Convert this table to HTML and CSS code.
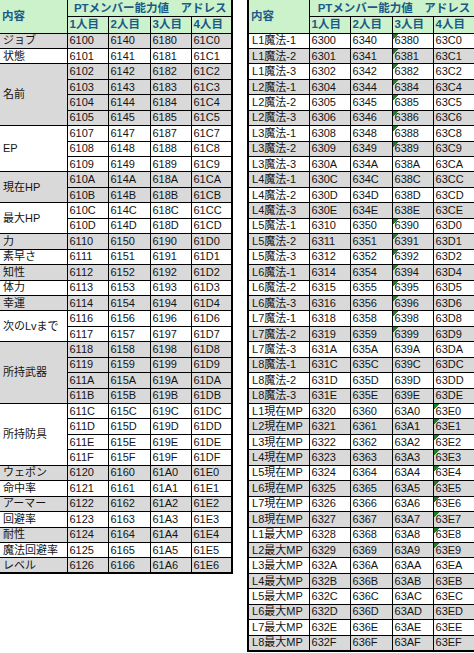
FILE: index.html
```html
<!DOCTYPE html>
<html lang="ja">
<head>
<meta charset="utf-8">
<title>PTメンバー能力値 アドレス</title>
<link rel="stylesheet" href="styles.css">
</head>
<body>
<div class="page">
  <table class="sheet left">
    <colgroup><col class="c-label-l"><col class="c-n"><col class="c-n2"><col class="c-n"><col class="c-n"></colgroup>
    <thead>
      <tr class="h"><th rowspan="2" class="hl">内容</th><th colspan="4" class="ht">PTメンバー能力値　アドレス</th></tr>
      <tr class="h"><th>1人目</th><th>2人目</th><th>3人目</th><th>4人目</th></tr>
    </thead>
    <tbody>
      <tr class="g"><td class="lb">ジョブ</td><td>6100</td><td>6140</td><td>6180</td><td>61C0</td></tr>
      <tr class="w"><td class="lb">状態</td><td>6101</td><td>6141</td><td>6181</td><td>61C1</td></tr>
      <tr class="g"><td class="lb" rowspan="4">名前</td><td>6102</td><td>6142</td><td>6182</td><td>61C2</td></tr>
      <tr class="g"><td>6103</td><td>6143</td><td>6183</td><td>61C3</td></tr>
      <tr class="g"><td>6104</td><td>6144</td><td>6184</td><td>61C4</td></tr>
      <tr class="g"><td>6105</td><td>6145</td><td>6185</td><td>61C5</td></tr>
      <tr class="w"><td class="lb" rowspan="3">EP</td><td>6107</td><td>6147</td><td>6187</td><td>61C7</td></tr>
      <tr class="w"><td>6108</td><td>6148</td><td>6188</td><td>61C8</td></tr>
      <tr class="w"><td>6109</td><td>6149</td><td>6189</td><td>61C9</td></tr>
      <tr class="g"><td class="lb" rowspan="2">現在HP</td><td>610A</td><td>614A</td><td>618A</td><td>61CA</td></tr>
      <tr class="g"><td>610B</td><td>614B</td><td>618B</td><td>61CB</td></tr>
      <tr class="w"><td class="lb" rowspan="2">最大HP</td><td>610C</td><td>614C</td><td>618C</td><td>61CC</td></tr>
      <tr class="w"><td>610D</td><td>614D</td><td>618D</td><td>61CD</td></tr>
      <tr class="g"><td class="lb">力</td><td>6110</td><td>6150</td><td>6190</td><td>61D0</td></tr>
      <tr class="w"><td class="lb">素早さ</td><td>6111</td><td>6151</td><td>6191</td><td>61D1</td></tr>
      <tr class="g"><td class="lb">知性</td><td>6112</td><td>6152</td><td>6192</td><td>61D2</td></tr>
      <tr class="w"><td class="lb">体力</td><td>6113</td><td>6153</td><td>6193</td><td>61D3</td></tr>
      <tr class="g"><td class="lb">幸運</td><td>6114</td><td>6154</td><td>6194</td><td>61D4</td></tr>
      <tr class="w"><td class="lb" rowspan="2">次のLvまで</td><td>6116</td><td>6156</td><td>6196</td><td>61D6</td></tr>
      <tr class="w"><td>6117</td><td>6157</td><td>6197</td><td>61D7</td></tr>
      <tr class="g"><td class="lb" rowspan="4">所持武器</td><td>6118</td><td>6158</td><td>6198</td><td>61D8</td></tr>
      <tr class="g"><td>6119</td><td>6159</td><td>6199</td><td>61D9</td></tr>
      <tr class="g"><td>611A</td><td>615A</td><td>619A</td><td>61DA</td></tr>
      <tr class="g"><td>611B</td><td>615B</td><td>619B</td><td>61DB</td></tr>
      <tr class="w"><td class="lb" rowspan="4">所持防具</td><td>611C</td><td>615C</td><td>619C</td><td>61DC</td></tr>
      <tr class="w"><td>611D</td><td>615D</td><td>619D</td><td>61DD</td></tr>
      <tr class="w"><td>611E</td><td>615E</td><td>619E</td><td>61DE</td></tr>
      <tr class="w"><td>611F</td><td>615F</td><td>619F</td><td>61DF</td></tr>
      <tr class="g"><td class="lb">ウェポン</td><td>6120</td><td>6160</td><td>61A0</td><td>61E0</td></tr>
      <tr class="w"><td class="lb">命中率</td><td>6121</td><td>6161</td><td>61A1</td><td>61E1</td></tr>
      <tr class="g"><td class="lb">アーマー</td><td>6122</td><td>6162</td><td>61A2</td><td>61E2</td></tr>
      <tr class="w"><td class="lb">回避率</td><td>6123</td><td>6163</td><td>61A3</td><td>61E3</td></tr>
      <tr class="g"><td class="lb">耐性</td><td>6124</td><td>6164</td><td>61A4</td><td>61E4</td></tr>
      <tr class="w"><td class="lb">魔法回避率</td><td>6125</td><td>6165</td><td>61A5</td><td>61E5</td></tr>
      <tr class="g last"><td class="lb">レベル</td><td>6126</td><td>6166</td><td>61A6</td><td>61E6</td></tr>
    </tbody>
  </table>

  <table class="sheet right">
    <colgroup><col class="c-label-r"><col class="c-n"><col class="c-n2"><col class="c-n"><col class="c-n3"></colgroup>
    <thead>
      <tr class="h"><th rowspan="2" class="hl">内容</th><th colspan="4" class="ht">PTメンバー能力値　アドレス</th></tr>
      <tr class="h"><th>1人目</th><th>2人目</th><th>3人目</th><th>4人目</th></tr>
    </thead>
    <tbody>
      <tr class="w"><td class="lb">L1魔法-1</td><td>6300</td><td>6340</td><td class="tri">6380</td><td>63C0</td></tr>
      <tr class="g"><td class="lb">L1魔法-2</td><td>6301</td><td>6341</td><td class="tri">6381</td><td>63C1</td></tr>
      <tr class="w"><td class="lb">L1魔法-3</td><td>6302</td><td>6342</td><td class="tri">6382</td><td>63C2</td></tr>
      <tr class="g"><td class="lb">L2魔法-1</td><td>6304</td><td>6344</td><td class="tri">6384</td><td>63C4</td></tr>
      <tr class="w"><td class="lb">L2魔法-2</td><td>6305</td><td>6345</td><td class="tri">6385</td><td>63C5</td></tr>
      <tr class="g"><td class="lb">L2魔法-3</td><td>6306</td><td>6346</td><td class="tri">6386</td><td>63C6</td></tr>
      <tr class="w"><td class="lb">L3魔法-1</td><td>6308</td><td>6348</td><td class="tri">6388</td><td>63C8</td></tr>
      <tr class="g"><td class="lb">L3魔法-2</td><td>6309</td><td>6349</td><td class="tri">6389</td><td>63C9</td></tr>
      <tr class="w"><td class="lb">L3魔法-3</td><td>630A</td><td>634A</td><td>638A</td><td>63CA</td></tr>
      <tr class="g"><td class="lb">L4魔法-1</td><td>630C</td><td>634C</td><td>638C</td><td>63CC</td></tr>
      <tr class="w"><td class="lb">L4魔法-2</td><td>630D</td><td>634D</td><td>638D</td><td>63CD</td></tr>
      <tr class="g"><td class="lb">L4魔法-3</td><td>630E</td><td>634E</td><td>638E</td><td>63CE</td></tr>
      <tr class="w"><td class="lb">L5魔法-1</td><td>6310</td><td>6350</td><td class="tri">6390</td><td>63D0</td></tr>
      <tr class="g"><td class="lb">L5魔法-2</td><td>6311</td><td>6351</td><td class="tri">6391</td><td>63D1</td></tr>
      <tr class="w"><td class="lb">L5魔法-3</td><td>6312</td><td>6352</td><td class="tri">6392</td><td>63D2</td></tr>
      <tr class="g"><td class="lb">L6魔法-1</td><td>6314</td><td>6354</td><td class="tri">6394</td><td>63D4</td></tr>
      <tr class="w"><td class="lb">L6魔法-2</td><td>6315</td><td>6355</td><td class="tri">6395</td><td>63D5</td></tr>
      <tr class="g"><td class="lb">L6魔法-3</td><td>6316</td><td>6356</td><td class="tri">6396</td><td>63D6</td></tr>
      <tr class="w"><td class="lb">L7魔法-1</td><td>6318</td><td>6358</td><td class="tri">6398</td><td>63D8</td></tr>
      <tr class="g"><td class="lb">L7魔法-2</td><td>6319</td><td>6359</td><td class="tri">6399</td><td>63D9</td></tr>
      <tr class="w"><td class="lb">L7魔法-3</td><td>631A</td><td>635A</td><td>639A</td><td>63DA</td></tr>
      <tr class="g"><td class="lb">L8魔法-1</td><td>631C</td><td>635C</td><td>639C</td><td>63DC</td></tr>
      <tr class="w"><td class="lb">L8魔法-2</td><td>631D</td><td>635D</td><td>639D</td><td>63DD</td></tr>
      <tr class="g"><td class="lb">L8魔法-3</td><td>631E</td><td>635E</td><td>639E</td><td>63DE</td></tr>
      <tr class="w"><td class="lb">L1現在MP</td><td>6320</td><td>6360</td><td>63A0</td><td class="tri">63E0</td></tr>
      <tr class="g"><td class="lb">L2現在MP</td><td>6321</td><td>6361</td><td>63A1</td><td class="tri">63E1</td></tr>
      <tr class="w"><td class="lb">L3現在MP</td><td>6322</td><td>6362</td><td>63A2</td><td class="tri">63E2</td></tr>
      <tr class="g"><td class="lb">L4現在MP</td><td>6323</td><td>6363</td><td>63A3</td><td class="tri">63E3</td></tr>
      <tr class="w"><td class="lb">L5現在MP</td><td>6324</td><td>6364</td><td>63A4</td><td class="tri">63E4</td></tr>
      <tr class="g"><td class="lb">L6現在MP</td><td>6325</td><td>6365</td><td>63A5</td><td class="tri">63E5</td></tr>
      <tr class="w"><td class="lb">L7現在MP</td><td>6326</td><td>6366</td><td>63A6</td><td class="tri">63E6</td></tr>
      <tr class="g"><td class="lb">L8現在MP</td><td>6327</td><td>6367</td><td>63A7</td><td class="tri">63E7</td></tr>
      <tr class="w"><td class="lb">L1最大MP</td><td>6328</td><td>6368</td><td>63A8</td><td class="tri">63E8</td></tr>
      <tr class="g"><td class="lb">L2最大MP</td><td>6329</td><td>6369</td><td>63A9</td><td class="tri">63E9</td></tr>
      <tr class="w"><td class="lb">L3最大MP</td><td>632A</td><td>636A</td><td>63AA</td><td>63EA</td></tr>
      <tr class="g"><td class="lb">L4最大MP</td><td>632B</td><td>636B</td><td>63AB</td><td>63EB</td></tr>
      <tr class="w"><td class="lb">L5最大MP</td><td>632C</td><td>636C</td><td>63AC</td><td>63EC</td></tr>
      <tr class="g"><td class="lb">L6最大MP</td><td>632D</td><td>636D</td><td>63AD</td><td>63ED</td></tr>
      <tr class="w"><td class="lb">L7最大MP</td><td>632E</td><td>636E</td><td>63AE</td><td>63EE</td></tr>
      <tr class="g last"><td class="lb">L8最大MP</td><td>632F</td><td>636F</td><td>63AF</td><td>63EF</td></tr>
    </tbody>
  </table>
</div>
</body>
</html>
```

FILE: styles.css
```css
html, body {
  margin: 0;
  padding: 0;
  background: #ffffff;
}

.page {
  width: 474px;
  height: 653px;
  overflow: hidden;
  display: flex;
  align-items: flex-start;
  gap: 14px;
}

.sheet {
  border-collapse: collapse;
  table-layout: fixed;
  flex: none;
  font-family: "Liberation Sans Narrow", "Liberation Sans", "Noto Sans CJK JP", sans-serif;
  font-size: 11px;
  line-height: 13px;
  color: #141414;
}

.sheet.left { width: 232px; }
.sheet.right { width: 229px; }

.c-label-l { width: 67px; }
.c-label-r { width: 61px; }
.c-n { width: 41px; }
.c-n2 { width: 42px; }
.c-n3 { width: 44px; }

.sheet th,
.sheet td {
  border: 1px solid #000;
  padding: 0 0 0 2px;
  text-align: left;
  vertical-align: middle;
  white-space: nowrap;
  overflow: hidden;
}

.sheet tr.h { height: 16.5px; }
.sheet tbody tr { height: 15.44px; }

.sheet th {
  background: #ccf2cc;
  color: #1b5a86;
  font-weight: bold;
  font-size: 11.5px;
}

.sheet th.ht { text-align: center; }
.sheet thead tr:first-child th { border-top: none; }

.sheet tr.g td { background-color: #d9d9d9; }
.sheet tr.w td { background-color: #ffffff; }

.sheet td.lb { padding-left: 3px; }

.sheet.left th:first-child,
.sheet.left td:first-child.lb { border-left: none; }
.sheet.left tr th:last-child,
.sheet.left tr td:last-child { border-right: 2px solid #000; }
.sheet.left thead tr:last-child th:last-child { border-right: 2px solid #000; }

.sheet.right th.hl,
.sheet.right td.lb { border-left: 2px solid #000; }

.sheet tr.last td { border-bottom: 2px solid #000; }

.sheet td.tri {
  background-image: linear-gradient(135deg, #1f7a2a 0 3.6px, transparent 3.6px);
  background-size: 7px 7px;
  background-repeat: no-repeat;
}
```
